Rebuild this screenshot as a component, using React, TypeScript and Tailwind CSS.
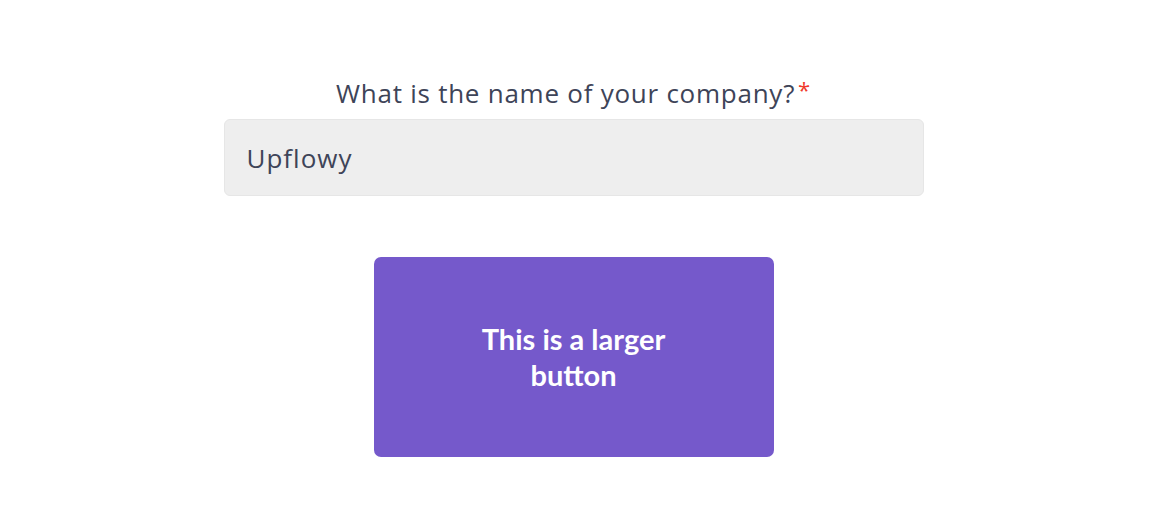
import React from "react";

export default function App() {
  return (
    <div className="w-[1152px] h-[528px] bg-white flex flex-col items-center pt-[75px] pr-[5px]">
      <label
        htmlFor="company"
        className="flex items-start font-['Open_Sans',sans-serif] text-[26px] leading-[36px] text-[#3e4458] tracking-[0.75px]"
      >
        What is the name of your company?
        <span className="text-[#f0382b] text-[22px] leading-[28px] ml-[3px]">*</span>
      </label>
      <input
        id="company"
        defaultValue="Upflowy"
        className="mt-[8px] w-[700px] h-[77px] rounded-[6px] bg-[#eeeeee] border border-[#e6e6e6] px-[22px] font-['Open_Sans',sans-serif] text-[26px] tracking-[1px] text-[#3e4458] outline-none"
      />
      <button className="mt-[61px] w-[400px] h-[200px] rounded-[7px] bg-[#7559cb] flex items-center justify-center px-[100px] font-['Lato',sans-serif] text-white text-[29px] leading-[36px] font-bold">
        This is a larger button
      </button>
    </div>
  );
}
